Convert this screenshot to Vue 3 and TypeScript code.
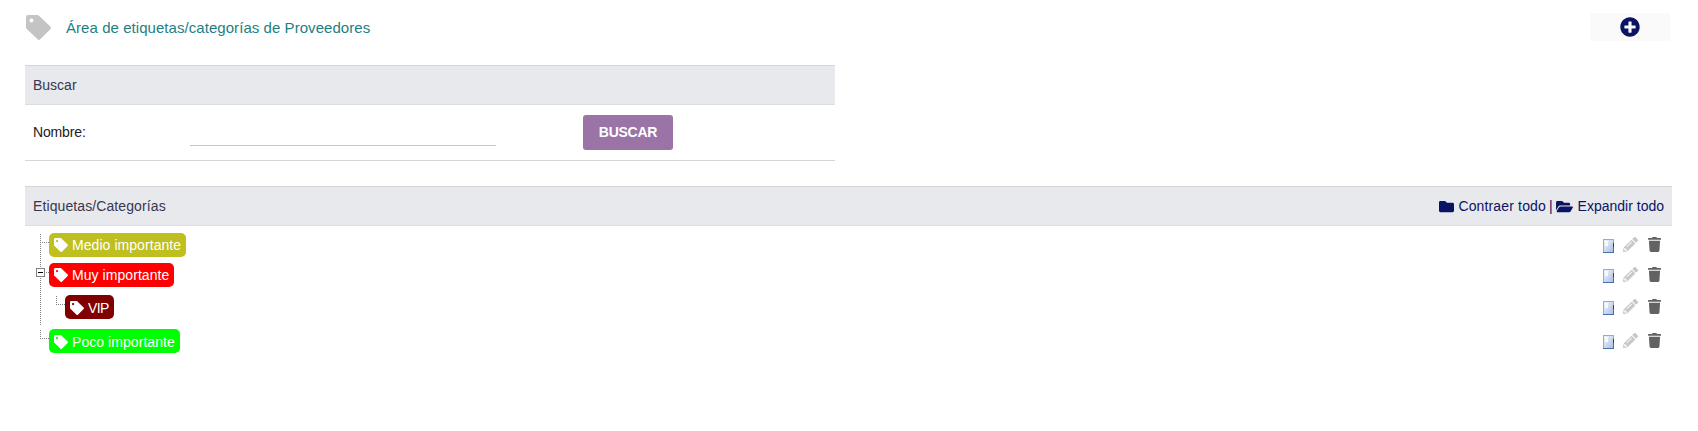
<script setup lang="ts">
import { ref } from 'vue'

interface TagRow {
  name: string
  color: string
  level: number
  height: number
}

const icons = {
  tag: 'M48 0H230c17 0 30 6 42 18L498 236q28 27 0 54L290 499q-26 26-52 0L14 285Q0 271 0 254V48Q0 0 48 0zM112 70a42 42 0 1 0 0 84a42 42 0 1 0 0-84z',
  plus: 'M256 8C119 8 8 119 8 256s111 248 248 248 248-111 248-248S393 8 256 8zm144 276c0 6.6-5.4 12-12 12h-92v92c0 6.6-5.4 12-12 12h-56c-6.6 0-12-5.4-12-12v-92h-92c-6.6 0-12-5.4-12-12v-56c0-6.6 5.4-12 12-12h92v-92c0-6.6 5.4-12 12-12h56c6.6 0 12 5.4 12 12v92h92c6.6 0 12 5.4 12 12v56z',
  folder: 'M464 128H272l-64-64H48C21.49 64 0 85.49 0 112v288c0 26.51 21.49 48 48 48h416c26.51 0 48-21.49 48-48V176c0-26.51-21.49-48-48-48z',
  folderOpen: 'M572.694 292.093L500.27 416.248A63.997 63.997 0 0 1 444.989 448H45.025c-18.523 0-30.064-20.093-20.731-36.093l72.424-124.155A64 64 0 0 1 152 256h399.964c18.523 0 30.064 20.093 20.73 36.093zM152 224h328v-48c0-26.51-21.49-48-48-48H272l-64-64H48C21.49 64 0 85.49 0 112v278.046l69.077-118.418C86.214 242.25 117.989 224 152 224z',
  trash: 'M432 32H312l-9.4-18.7A24 24 0 0 0 281.1 0H166.8a23.72 23.72 0 0 0-21.4 13.3L136 32H16A16 16 0 0 0 0 48v32a16 16 0 0 0 16 16h416a16 16 0 0 0 16-16V48a16 16 0 0 0-16-16zM53.2 467a48 48 0 0 0 47.9 45h245.8a48 48 0 0 0 47.9-45L416 128H32z',
  pencil: 'M497.9 142.1l-46.1 46.1c-4.7 4.7-12.3 4.7-17 0l-111-111c-4.7-4.7-4.7-12.3 0-17l46.1-46.1c18.7-18.7 49.1-18.7 67.9 0l60.1 60.1c18.8 18.7 18.8 49.1 0 67.9zM284.2 99.8L21.6 362.4.4 483.9c-2.9 16.4 11.4 30.6 27.8 27.8l121.5-21.3 262.6-262.6c4.7-4.7 4.7-12.3 0-17l-111-111c-4.8-4.7-12.4-4.7-17.1 0zM124.1 339.9c-5.5-5.5-5.5-14.3 0-19.8l154-154c5.5-5.5 14.3-5.5 19.8 0s5.5 14.3 0 19.8l-154 154c-5.5 5.5-14.3 5.5-19.8 0zM88 424h48v36.3l-64.5 11.3-31.1-31.1L51.7 376H88v48z',
}

const query = ref('')

const rows: TagRow[] = [
  { name: 'Medio importante', color: '#bfbf1f', level: 0, height: 30 },
  { name: 'Muy importante', color: '#ff0000', level: 0, height: 32 },
  { name: 'VIP', color: '#800000', level: 1, height: 34 },
  { name: 'Poco importante', color: '#00ff00', level: 0, height: 24 },
]
</script>

<template>
  <div class="page">
    <header class="head">
      <svg class="head-tag" viewBox="0 0 512 512"><path fill-rule="evenodd" :d="icons.tag" /></svg>
      <h1>Área de etiquetas/categorías de Proveedores</h1>
      <button class="add" type="button" aria-label="Añadir">
        <svg viewBox="0 0 512 512"><path :d="icons.plus" /></svg>
      </button>
    </header>

    <section class="search">
      <div class="bar">Buscar</div>
      <form class="search-row" @submit.prevent>
        <label for="nombre">Nombre:</label>
        <input id="nombre" v-model="query" type="text" />
        <button class="submit" type="submit">BUSCAR</button>
      </form>
    </section>

    <section class="tags">
      <div class="bar">
        <span class="title">Etiquetas/Categorías</span>
        <span class="links">
          <a><svg class="folder" viewBox="0 0 512 512"><path :d="icons.folder" /></svg><span class="collapse">Contraer todo</span></a>
          <span class="sep">|</span>
          <a><svg class="folder-open" viewBox="0 0 576 512"><path :d="icons.folderOpen" /></svg><span>Expandir todo</span></a>
        </span>
      </div>

      <div class="tree">
        <svg class="lines" width="42" height="122" viewBox="0 0 42 122">
          <g stroke="#808080" stroke-dasharray="1 1" fill="none">
            <path d="M4.500 1V93M4.500 97V106M6 9.500H13M10 39.500H13M6 105.500H13M20.500 63V72M22 71.500H29" />
          </g>
          <rect x="0.500" y="35.500" width="8" height="8" fill="#fff" stroke="#808080" />
          <path d="M2 39.500H7" stroke="#000" />
        </svg>
        <div v-for="row in rows" :key="row.name" class="row" :style="{ height: row.height + 'px' }">
          <span class="chip" :class="{ child: row.level === 1 }" :style="{ backgroundColor: row.color }">
            <svg viewBox="0 0 512 512"><path fill-rule="evenodd" :d="icons.tag" /></svg>{{ row.name }}
          </span>
          <span class="actions">
            <svg class="book" viewBox="0 0 11 14" shape-rendering="crispEdges">
              <defs>
                <linearGradient id="cover" x1="0" y1="0" x2="1" y2="1">
                  <stop offset="0" stop-color="#f3f7fd" />
                  <stop offset="1" stop-color="#aabfe2" />
                </linearGradient>
              </defs>
              <path fill="#8eabdc" d="M0 0h11v14H0z" />
              <path fill="url(#cover)" d="M1 1h9v12H1z" />
              <path fill="#f5f8fd" d="M2 2h3v5H2z" />
              <path fill="#4a6ead" d="M0 13h11v1H0zM10 4h1v10h-1z" />
              <path fill="#263f72" d="M10 4h1v4h-1z" />
            </svg>
            <svg class="pencil" viewBox="0 0 512 512"><path :d="icons.pencil" /></svg>
            <svg class="trash" viewBox="0 0 448 512"><path :d="icons.trash" /></svg>
          </span>
        </div>
      </div>
    </section>
  </div>
</template>

<style>
body {
  background: #fff;
}
</style>

<style scoped>
.page {
  box-sizing: border-box;
  width: 1698px;
  height: 431px;
  padding: 13px 26px 0 25px;
  background: #fff;
  color: #212121;
  font: 14px/18px 'Liberation Sans', Arial, sans-serif;
}
svg {
  display: block;
  flex: none;
  fill: currentColor;
}
.head {
  display: flex;
  align-items: center;
  height: 28px;
  padding: 0 2px 0 1px;
}
.head-tag {
  width: 25px;
  height: 25px;
  color: #c4c4c4;
}
h1 {
  margin: 0 auto 0 15px;
  padding-top: 2px;
  color: #1d8083;
  font-size: 15px;
  font-weight: 400;
  letter-spacing: 0.055px;
  white-space: nowrap;
}
.add {
  display: grid;
  place-items: center;
  width: 80px;
  height: 28px;
  padding: 0;
  border: 0;
  background: #fafafa;
  color: #0a1464;
}
.add svg {
  width: 20px;
  height: 20px;
}
.search {
  width: 810px;
  margin-top: 24px;
}
.bar {
  box-sizing: border-box;
  display: flex;
  align-items: center;
  justify-content: space-between;
  height: 40px;
  padding: 0 8px;
  border-top: 1px solid #d5d7d7;
  border-bottom: 1px solid #dcdddd;
  background: #e8e9ed;
  color: #37374f;
}
.title {
  letter-spacing: 0.1px;
}
.search-row {
  box-sizing: border-box;
  display: flex;
  align-items: center;
  height: 56px;
  padding-left: 8px;
  border-bottom: 1px solid #d5d7d7;
}
label {
  width: 157px;
  padding-bottom: 1px;
  letter-spacing: -0.15px;
}
input {
  box-sizing: border-box;
  width: 306px;
  height: 27px;
  padding: 0 4px;
  border: 0;
  border-bottom: 1px solid #c6c6c6;
  outline: none;
  font: inherit;
}
.submit {
  width: 90px;
  height: 35px;
  margin-left: 87px;
  padding: 0;
  border: 0;
  border-radius: 3px;
  background: #9b74a7;
  color: #fff;
  font: bold 14px/35px 'Liberation Sans', Arial, sans-serif;
  letter-spacing: -0.25px;
}
.tags {
  margin-top: 25px;
}
.links {
  display: flex;
  color: #0a1464;
}
.links a {
  display: flex;
  align-items: center;
  gap: 4px;
}
.collapse {
  letter-spacing: 0.15px;
}
.sep {
  margin: 0 3px;
}
.folder {
  width: 15px;
  height: 15px;
}
.links .folder-open {
  width: 17px;
  height: 15px;
  margin-right: 1px;
}
.tree {
  position: relative;
  padding: 7px 11px 0 24px;
}
/* Dotted connectors run behind and between the rows of the tree. */
.lines {
  position: absolute;
  top: 7px;
  left: 11px;
}
.row {
  display: flex;
  align-items: flex-start;
  justify-content: space-between;
}
.chip {
  box-sizing: border-box;
  display: flex;
  align-items: center;
  gap: 4px;
  height: 24px;
  padding: 0 5px;
  border-radius: 5px;
  color: #fff;
  letter-spacing: 0.06px;
  white-space: nowrap;
}
.row:last-child .chip {
  padding-top: 1px;
}
.chip svg {
  width: 14px;
  height: 14px;
}
.child {
  margin-left: 16px;
  padding-top: 1px;
  letter-spacing: -0.6px;
}
.actions {
  display: flex;
  align-items: flex-start;
  padding-top: 4px;
}
.book {
  width: 11px;
  height: 14px;
  margin-top: 2px;
}
.pencil {
  width: 15px;
  height: 15px;
  margin-left: 9px;
  color: #c8c8c8;
}
.trash {
  width: 13px;
  height: 15px;
  margin-left: 10px;
  color: #626262;
}
</style>
